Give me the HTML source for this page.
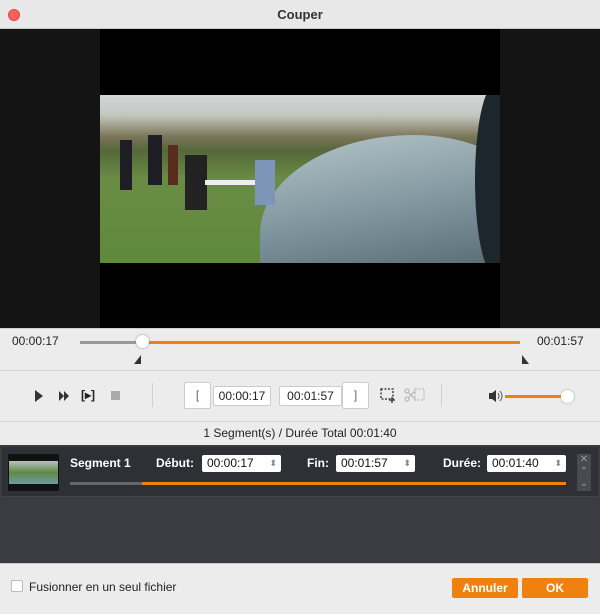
<!DOCTYPE html>
<html><head><meta charset="utf-8"><style>
*{margin:0;padding:0;box-sizing:border-box}
body{width:600px;height:614px;overflow:hidden;background:#ececec;font-family:"Liberation Sans",sans-serif;font-size:12px;color:#222;position:relative}
.a{position:absolute}
.tb{background:#fff;border:1px solid #ccc;border-radius:2px;font-size:12px;text-align:center;line-height:18px}
.lbl{color:#fff;font-weight:bold;font-size:12px}
.spin{background:#fff;border-radius:2px;height:17px;font-size:12px;line-height:17px;padding-left:5px;color:#111}
.spin:after{content:"⬍";position:absolute;right:4px;top:0;font-size:9px;color:#888}
</style></head><body>
<div class="a" style="left:0;top:0;width:600px;height:29px;background:#e8e8e8;border-bottom:1px solid #c8c8c8"></div>
<div class="a" style="left:8px;top:9px;width:12px;height:12px;border-radius:50%;background:#fc605c;border:1px solid #de4a45"></div>
<div class="a" style="left:0;top:7px;width:600px;text-align:center;font-size:13px;font-weight:bold;color:#333">Couper</div>
<div class="a" style="left:0;top:29px;width:600px;height:299px;background:#141414"></div>
<div class="a" style="left:100px;top:29px;width:400px;height:299px;background:#000"></div>
<div class="a" style="left:100px;top:95px;width:400px;height:168px;background:linear-gradient(180deg,#d2d6d6 0%,#c4c7c0 12%,#7a7458 25%,#55683a 33%,#6a8c45 50%,#5e8a3c 100%);overflow:hidden">
 <div class="a" style="left:160px;top:40px;width:280px;height:180px;border-radius:55% 45% 0 0;background:linear-gradient(170deg,#b5c6cb,#7d939b 45%,#3b4d55)"></div>
 <div class="a" style="left:375px;top:-10px;width:40px;height:190px;background:#1c262c;border-radius:50% 0 0 50%"></div>
 <div class="a" style="left:20px;top:45px;width:12px;height:50px;background:#1e1e24"></div>
 <div class="a" style="left:48px;top:40px;width:14px;height:50px;background:#1e1e24"></div>
 <div class="a" style="left:68px;top:50px;width:10px;height:40px;background:#5a2c20"></div>
 <div class="a" style="left:85px;top:60px;width:22px;height:55px;background:#222"></div>
 <div class="a" style="left:105px;top:85px;width:50px;height:5px;background:#eee"></div>
 <div class="a" style="left:155px;top:65px;width:20px;height:45px;background:#7d96b8"></div>
</div>
<div class="a" style="left:0;top:328px;width:600px;height:1px;background:#cfcfcf"></div>
<div class="a" style="left:12px;top:334px">00:00:17</div>
<div class="a" style="left:537px;top:334px">00:01:57</div>
<div class="a" style="left:80px;top:341px;width:62px;height:3px;background:#999"></div>
<div class="a" style="left:142px;top:341px;width:378px;height:3px;background:#f0810f"></div>
<div class="a" style="left:136px;top:335px;width:13px;height:13px;border-radius:50%;background:#fff;box-shadow:0 0 2px #888"></div>
<div class="a" style="left:134px;top:355px;width:0;height:0;border-left:7px solid transparent;border-bottom:9px solid #333"></div>
<div class="a" style="left:522px;top:355px;width:0;height:0;border-right:7px solid transparent;border-bottom:9px solid #333"></div>
<div class="a" style="left:0;top:370px;width:600px;height:1px;background:#d4d4d4"></div>
<div class="a" style="left:35px;top:390px;border-left:8px solid #333;border-top:6px solid transparent;border-bottom:6px solid transparent"></div>
<div class="a" style="left:59px;top:391px;border-left:5px solid #333;border-top:5px solid transparent;border-bottom:5px solid transparent"></div>
<div class="a" style="left:64px;top:391px;border-left:5px solid #333;border-top:5px solid transparent;border-bottom:5px solid transparent"></div>
<div class="a" style="left:81px;top:388px;font-size:12px;font-weight:bold">[▸]</div>
<div class="a" style="left:111px;top:391px;width:9px;height:9px;background:#aaa"></div>
<div class="a" style="left:152px;top:383px;width:1px;height:24px;background:#d0d0d0"></div>
<div class="a tb" style="left:184px;top:382px;width:27px;height:27px;line-height:25px;color:#666">[</div>
<div class="a tb" style="left:213px;top:386px;width:58px">00:00:17</div>
<div class="a tb" style="left:279px;top:386px;width:63px">00:01:57</div>
<div class="a tb" style="left:342px;top:382px;width:27px;height:27px;line-height:25px;color:#666">]</div>
<svg class="a" style="left:379px;top:386px" width="18" height="18" viewBox="0 0 18 18" fill="none" stroke="#444" stroke-width="1.5"><rect x="2" y="3" width="12" height="10" stroke-dasharray="2 1.5"/><path d="M13 11v6M10 14h6"/></svg>
<svg class="a" style="left:404px;top:386px" width="22" height="18" viewBox="0 0 22 18" fill="none" stroke="#bbb" stroke-width="1.3"><circle cx="3" cy="13" r="2"/><circle cx="3" cy="5" r="2"/><path d="M4 12L11 5M4 6l7 7"/><rect x="11" y="3" width="9" height="11" stroke-dasharray="2 1.5"/></svg>
<div class="a" style="left:441px;top:383px;width:1px;height:24px;background:#d0d0d0"></div>
<svg class="a" style="left:488px;top:389px" width="16" height="14" viewBox="0 0 16 14"><path d="M1 4h3l4-3v12l-4-3H1z" fill="#333"/><path d="M10 4q2 3 0 6M12 2q4 5 0 10" stroke="#555" fill="none" stroke-width="1"/></svg>
<div class="a" style="left:505px;top:395px;width:60px;height:3px;background:#f0810f"></div>
<div class="a" style="left:561px;top:390px;width:13px;height:13px;border-radius:50%;background:#fff;box-shadow:0 0 2px #999"></div>
<div class="a" style="left:0;top:421px;width:600px;height:1px;background:#d8d8d8"></div>
<div class="a" style="left:0;top:426px;width:600px;text-align:center">1 Segment(s) / Durée Total 00:01:40</div>
<div class="a" style="left:0;top:445px;width:600px;height:118px;background:#3b3c41"></div>
<div class="a" style="left:2px;top:447px;width:596px;height:50px;background:#2f3035;border-bottom:1px solid #45464b"></div>
<div class="a" style="left:8px;top:454px;width:51px;height:37px;background:#111"></div>
<div class="a" style="left:9px;top:461px;width:49px;height:23px;background:linear-gradient(180deg,#b8c0c0,#5f8a45 50%,#6f9aa5)"></div>
<div class="a lbl" style="left:70px;top:456px">Segment 1</div>
<div class="a lbl" style="left:156px;top:456px">Début:</div>
<div class="a spin" style="left:202px;top:455px;width:79px">00:00:17</div>
<div class="a lbl" style="left:307px;top:456px">Fin:</div>
<div class="a spin" style="left:336px;top:455px;width:79px">00:01:57</div>
<div class="a lbl" style="left:443px;top:456px">Durée:</div>
<div class="a spin" style="left:487px;top:455px;width:79px">00:01:40</div>
<div class="a" style="left:70px;top:482px;width:72px;height:3px;background:#666"></div>
<div class="a" style="left:142px;top:482px;width:424px;height:3px;background:#f0810f"></div>
<div class="a" style="left:577px;top:454px;width:14px;height:37px;background:#4a4b50;color:#999;font-size:10px;text-align:center;line-height:12px">✕<br>⌃<br>⌄</div>
<div class="a" style="left:0;top:563px;width:600px;height:1px;background:#c8c8c8"></div>
<div class="a" style="left:11px;top:580px;width:12px;height:12px;background:#fff;border:1px solid #bbb;border-radius:2px"></div>
<div class="a" style="left:29px;top:580px">Fusionner en un seul fichier</div>
<div class="a" style="left:452px;top:578px;width:66px;height:20px;background:#f0810f;border-radius:2px;color:#fff;font-weight:bold;text-align:center;line-height:20px">Annuler</div>
<div class="a" style="left:522px;top:578px;width:66px;height:20px;background:#f0810f;border-radius:2px;color:#fff;font-weight:bold;text-align:center;line-height:20px">OK</div>
</body></html>
